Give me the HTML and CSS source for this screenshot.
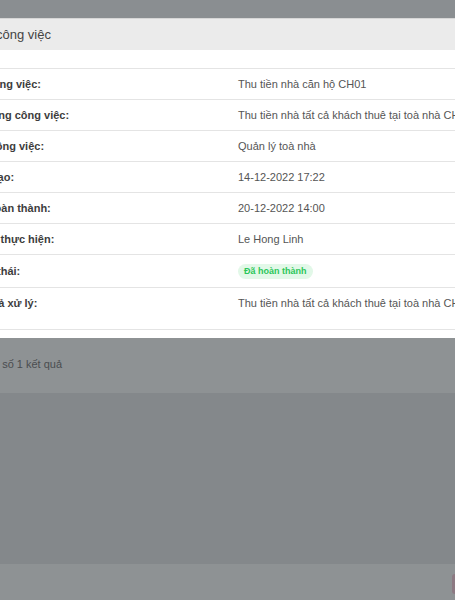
FILE: index.html
```html
<!DOCTYPE html>
<html lang="vi">
<head>
    <meta charset="UTF-8">
    <meta name="viewport" content="width=device-width, initial-scale=1.0">
    <title>Chi tiết công việc</title>
    <link rel="stylesheet" href="styles.css">
</head>
<body>
    <div class="modal">
        <div class="modal-header">Chi tiết công việc</div>
        <div class="modal-body">
            <table class="detail">
                <tr>
                    <td class="label">Tên công việc:</td>
                    <td>Thu tiền nhà căn hộ CH01</td>
                </tr>
                <tr>
                    <td class="label">Nội dung công việc:</td>
                    <td>Thu tiền nhà tất cả khách thuê tại toà nhà CH01</td>
                </tr>
                <tr>
                    <td class="label">Loại công việc:</td>
                    <td>Quản lý toà nhà</td>
                </tr>
                <tr>
                    <td class="label">Ngày tạo:</td>
                    <td>14-12-2022 17:22</td>
                </tr>
                <tr>
                    <td class="label">Hạn hoàn thành:</td>
                    <td>20-12-2022 14:00</td>
                </tr>
                <tr>
                    <td class="label">Người thực hiện:</td>
                    <td>Le Hong Linh</td>
                </tr>
                <tr>
                    <td class="label">Trạng thái:</td>
                    <td><span class="badge">Đã hoàn thành</span></td>
                </tr>
                <tr class="tall">
                    <td class="label">Kết quả xử lý:</td>
                    <td>Thu tiền nhà tất cả khách thuê tại toà nhà CH01</td>
                </tr>
            </table>
        </div>
    </div>

    <div class="results">Tổng số 1 kết quả</div>
    <div class="content"></div>
    <div class="footer">
        <span class="btn-danger"></span>
    </div>
</body>
</html>
```

FILE: styles.css
```css
html, body {
    margin: 0;
    padding: 0;
}
body {
    font-family: "Liberation Sans", Arial, sans-serif;
    background-color: #8a8e91;
    padding-top: 18px;
    overflow: hidden;
    width: 455px;
    height: 600px;
}
.modal {
    width: 600px;
    margin-left: -60px;
    background-color: #fff;
}
.modal-header {
    background-color: #ebebeb;
    border-top: 1px solid #d6d6d6;
    height: 31px;
    line-height: 31px;
    padding: 0 12px;
    font-size: 13px;
    color: #444;
}
.modal-body {
    padding: 18px 12px 8px;
}
.detail {
    width: 100%;
    border-collapse: collapse;
    border-top: 1px solid #e4e4e4;
}
.detail td {
    border-bottom: 1px solid #e4e4e4;
    padding: 8px 12px;
    line-height: 14px;
    font-size: 11px;
    color: #555;
    text-align: left;
    vertical-align: middle;
    white-space: nowrap;
}
.detail td.label {
    width: 250px;
    font-weight: bold;
    color: #3d3d3d;
}
.detail tr.tall td {
    vertical-align: top;
    padding-bottom: 19px;
}
.badge {
    display: inline-block;
    background-color: #e2f8e8;
    color: #2cc65a;
    font-size: 9px;
    font-weight: bold;
    line-height: 13px;
    padding: 1px 6px;
    border-radius: 8px;
}
.results {
    background-color: #8e9294;
    height: 55px;
    line-height: 52px;
    margin-left: -26px;
    font-size: 11px;
    color: #4a4d50;
}
.content {
    background-color: #84888b;
    height: 171px;
}
.footer {
    background-color: #8e9294;
    height: 37px;
    display: flex;
    justify-content: flex-end;
    padding-top: 10px;
    box-sizing: border-box;
}
.btn-danger {
    width: 3px;
    height: 20px;
    background-color: #8d7a83;
    border-radius: 3px 0 0 3px;
}
```
